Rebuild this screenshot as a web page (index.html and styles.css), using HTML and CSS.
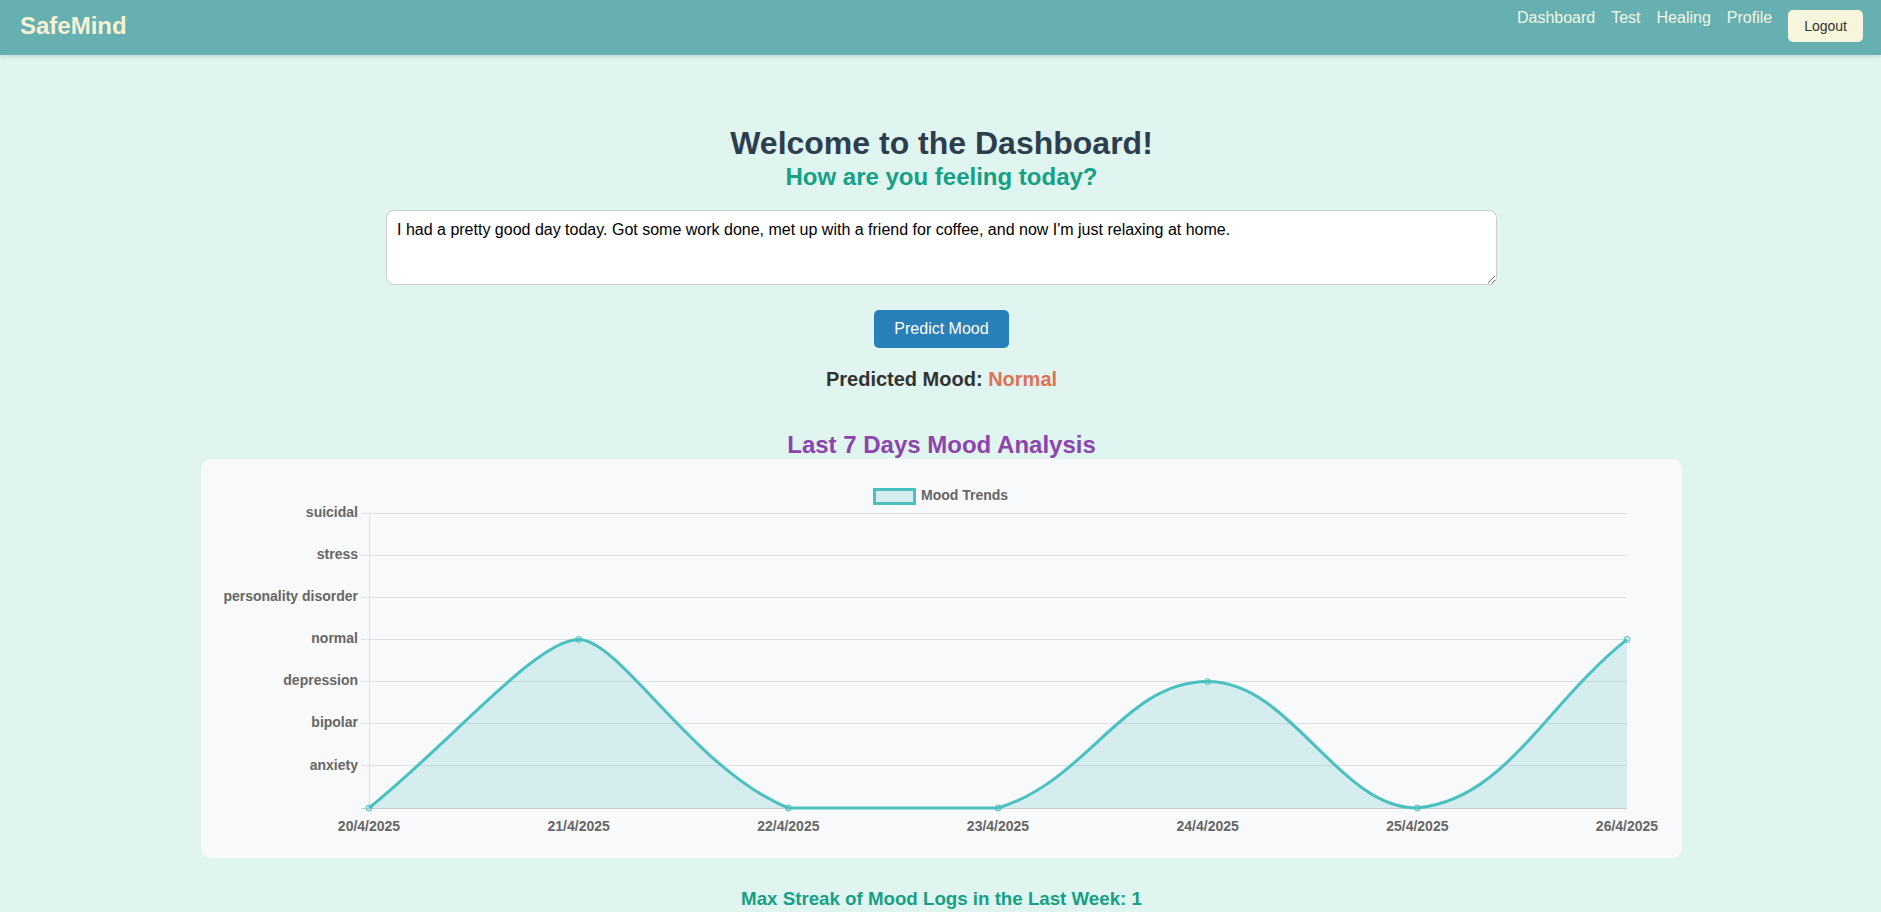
FILE: index.html
```html
<!DOCTYPE html>
<html lang="en">
<head>
<meta charset="utf-8">
<title>SafeMind Dashboard</title>
<link rel="stylesheet" href="styles.css">
</head>
<body>
<header class="navbar">
  <div class="logo">SafeMind</div>
  <nav class="nav">
    <a href="#" class="nav-link">Dashboard</a>
    <a href="#" class="nav-link">Test</a>
    <a href="#" class="nav-link">Healing</a>
    <a href="#" class="nav-link">Profile</a>
    <button class="logout">Logout</button>
  </nav>
</header>
<main class="main">
  <h1 class="title">Welcome to the Dashboard!</h1>
  <h2 class="subtitle">How are you feeling today?</h2>
  <textarea class="entry">I had a pretty good day today. Got some work done, met up with a friend for coffee, and now I'm just relaxing at home.</textarea>
  <button class="predict">Predict Mood</button>
  <h3 class="result">Predicted Mood: <span class="mood">Normal</span></h3>
  <h2 class="chart-title">Last 7 Days Mood Analysis</h2>
  <div class="chart-card">
    <svg class="chart" width="1441" height="359" viewBox="221 479 1441 359" xmlns="http://www.w3.org/2000/svg">
      <g class="grid" stroke="#dfe0e1" stroke-width="1" shape-rendering="crispEdges">
        <line x1="361" y1="513" x2="1627" y2="513"/>
        <line x1="361" y1="555.14" x2="1627" y2="555.14"/>
        <line x1="361" y1="597.29" x2="1627" y2="597.29"/>
        <line x1="361" y1="639.43" x2="1627" y2="639.43"/>
        <line x1="361" y1="681.57" x2="1627" y2="681.57"/>
        <line x1="361" y1="723.71" x2="1627" y2="723.71"/>
        <line x1="361" y1="765.86" x2="1627" y2="765.86"/>
        <line x1="369" y1="513" x2="369" y2="808"/>
      </g>
      <path class="area" d="M369,808 C452.87,740.57 536.8,639.43 578.67,639.43 C620.5,639.43 694.02,770.1 788.33,808 C861.75,808 920.67,808 998,808 C1088.41,780.8 1123.8,681.57 1207.67,681.57 C1291.5,681.57 1337.41,808 1417.33,808 C1505.14,799.3 1543.13,706.86 1627,639.43 L1627,808 L369,808 Z" fill="rgba(75,192,192,0.2)"/>
      <line x1="361" y1="808" x2="1627" y2="808" stroke="#c9cacc" stroke-width="1" shape-rendering="crispEdges"/>
      <path class="curve" d="M369,808 C452.87,740.57 536.8,639.43 578.67,639.43 C620.5,639.43 694.02,770.1 788.33,808 C861.75,808 920.67,808 998,808 C1088.41,780.8 1123.8,681.57 1207.67,681.57 C1291.5,681.57 1337.41,808 1417.33,808 C1505.14,799.3 1543.13,706.86 1627,639.43" fill="none" stroke="#4bc0c0" stroke-width="3"/>
      <g fill="rgba(75,192,192,0.2)" stroke="#4bc0c0" stroke-width="1">
        <circle cx="369" cy="808" r="3"/>
        <circle cx="578.67" cy="639.43" r="3"/>
        <circle cx="788.33" cy="808" r="3"/>
        <circle cx="998" cy="808" r="3"/>
        <circle cx="1207.67" cy="681.57" r="3"/>
        <circle cx="1417.33" cy="808" r="3"/>
        <circle cx="1627" cy="639.43" r="3"/>
      </g>
      <g class="ylabels" text-anchor="end">
        <text x="358" y="517">suicidal</text>
        <text x="358" y="559">stress</text>
        <text x="358" y="601">personality disorder</text>
        <text x="358" y="643">normal</text>
        <text x="358" y="685">depression</text>
        <text x="358" y="727">bipolar</text>
        <text x="358" y="769.5">anxiety</text>
      </g>
      <g class="xlabels" text-anchor="middle">
        <text x="369" y="830.5">20/4/2025</text>
        <text x="578.67" y="830.5">21/4/2025</text>
        <text x="788.33" y="830.5">22/4/2025</text>
        <text x="998" y="830.5">23/4/2025</text>
        <text x="1207.67" y="830.5">24/4/2025</text>
        <text x="1417.33" y="830.5">25/4/2025</text>
        <text x="1627" y="830.5">26/4/2025</text>
      </g>
      <rect x="874.5" y="489.5" width="40" height="14" fill="rgba(75,192,192,0.2)" stroke="#4bc0c0" stroke-width="3"/>
      <text class="legend" x="921" y="500">Mood Trends</text>
    </svg>
  </div>
  <h3 class="streak">Max Streak of Mood Logs in the Last Week: 1</h3>
</main>
</body>
</html>
```
FILE: styles.css
```css
* { box-sizing: border-box; }

body {
  margin: 0;
  background: #e0f5ef;
  font-family: "Liberation Sans", Arial, sans-serif;
  color: #333;
}

.navbar {
  display: flex;
  justify-content: space-between;
  align-items: flex-start;
  height: 55px;
  padding: 0 18px 0 20px;
  background: #66b0b2;
  box-shadow: 0 2px 4px rgba(0, 0, 0, 0.1);
}

.logo {
  margin-top: 11.5px;
  font-size: 24px;
  line-height: 28px;
  font-weight: bold;
  color: #f7f2d2;
}

.nav {
  display: flex;
  align-items: flex-start;
  gap: 16px;
  padding-top: 9px;
}

.nav-link {
  font-size: 16px;
  line-height: 18px;
  color: #f2f7e4;
  text-decoration: none;
}

.logout {
  margin-top: 1px;
  padding: 8px 16px;
  font-family: "Liberation Sans", Arial, sans-serif;
  font-size: 14px;
  line-height: 16px;
  color: #333;
  background: #f7f5dc;
  border: none;
  border-radius: 5px;
}

.main {
  padding: 70px 0 0 2px;
  text-align: center;
}

.title {
  margin: 0;
  font-size: 32px;
  line-height: 37px;
  font-weight: bold;
  color: #2c3e50;
}

.subtitle {
  margin: 1px 0 0;
  font-size: 24px;
  line-height: 28px;
  font-weight: bold;
  color: #16a085;
}

.entry {
  display: block;
  width: 1111px;
  height: 75px;
  margin: 19px auto 25px;
  padding: 10px;
  font-family: "Liberation Sans", Arial, sans-serif;
  font-size: 16px;
  color: #000;
  background: #fff;
  border: 1px solid #ccc;
  border-radius: 8px;
}

.predict {
  display: block;
  margin: 0 auto;
  padding: 10px 20px;
  font-family: "Liberation Sans", Arial, sans-serif;
  font-size: 16px;
  line-height: 18px;
  color: #fff;
  background: #2980b9;
  border: none;
  border-radius: 5px;
}

.result {
  margin: 20px 0 0;
  font-size: 20px;
  line-height: 23px;
  font-weight: bold;
  color: #333;
}

.mood {
  color: #e17055;
}

.chart-title {
  margin: 40px 0 0;
  font-size: 24px;
  line-height: 28px;
  font-weight: bold;
  color: #8e44ad;
}

.chart-card {
  width: 1481px;
  height: 399px;
  margin: 0 auto;
  padding: 20px;
  background: #f8f9fa;
  border-radius: 10px;
}

.chart {
  display: block;
}

.chart text {
  font-family: "Liberation Sans", Arial, sans-serif;
  font-size: 14px;
  font-weight: bold;
  fill: #666;
}

.streak {
  margin: 30px 0 0;
  font-size: 18.72px;
  line-height: 22px;
  font-weight: bold;
  color: #16a085;
}
```
